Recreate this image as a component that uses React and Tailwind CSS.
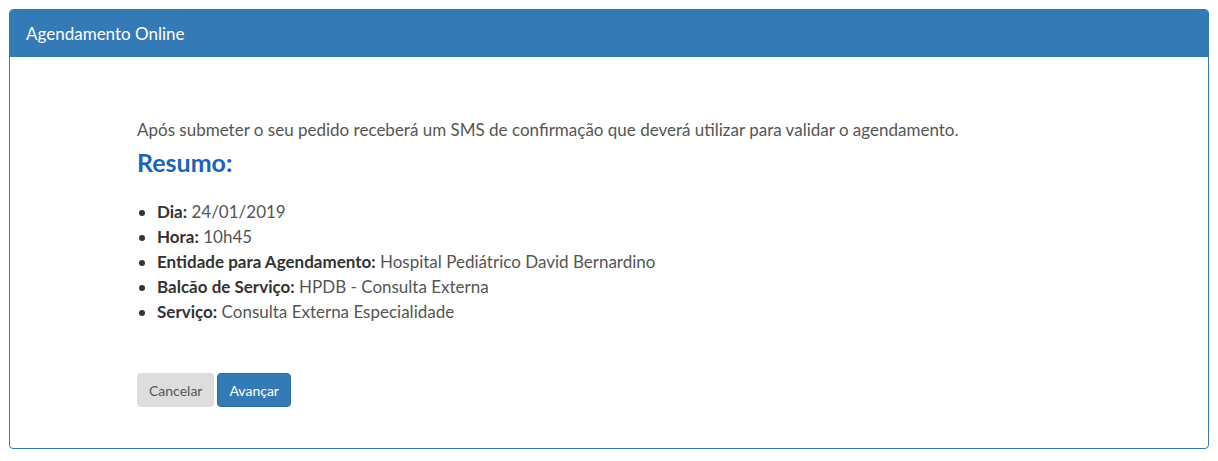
import React from "react";

const ITEMS = [
  ["Dia:", "24/01/2019"],
  ["Hora:", "10h45"],
  ["Entidade para Agendamento:", "Hospital Pediátrico David Bernardino"],
  ["Balcão de Serviço:", "HPDB - Consulta Externa"],
  ["Serviço:", "Consulta Externa Especialidade"],
];

export default function App() {
  return (
    <div className="w-full bg-white p-[9px]" style={{ fontFamily: "Lato, 'Open Sans', sans-serif" }}>
      <div className="border border-[#337ab7] rounded-[4px] h-[440px]">
        <div className="bg-[#337ab7] h-[47px] rounded-t-[3px] px-[16px] flex items-center text-white text-[17px]">
          Agendamento Online
        </div>

        <div className="pl-[127px] pt-[62px]">
          <p className="text-[#555] text-[17px] leading-[22px]">
            Após submeter o seu pedido receberá um SMS de confirmação que deverá utilizar para validar o agendamento.
          </p>
          <h2 className="text-[#1b64b4] text-[25px] font-bold mt-[6px] leading-[30px]">Resumo:</h2>

          <ul className="mt-[22px] pl-[20px] list-disc text-[17px] leading-[25px] text-[#555] marker:text-[#333]">
            {ITEMS.map(([label, value], i) => (
              <li key={i}>
                <span className="font-bold text-[#333]">{label}</span> {value}
              </li>
            ))}
          </ul>

          <div className="mt-[49px] flex gap-[3px]">
            <button className="h-[34px] px-[12px] bg-[#ddd] text-[#555] text-[14px] rounded-[4px]">
              Cancelar
            </button>
            <button className="h-[34px] px-[11px] bg-[#337ab7] border border-[#2e6da4] text-white text-[14px] rounded-[4px]">
              Avançar
            </button>
          </div>
        </div>
      </div>
    </div>
  );
}
